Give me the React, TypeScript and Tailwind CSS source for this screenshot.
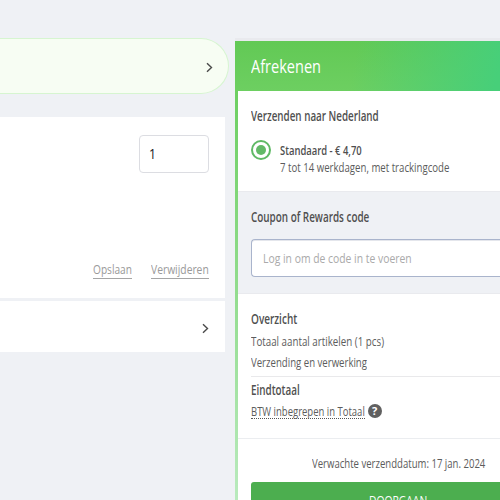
import { useLayoutEffect, useRef, useState } from "react";
import type { ReactNode } from "react";

type FitProps = { width: number; className?: string; children: ReactNode };

// One line of text, condensed horizontally to the given width.
function Fit({ width, className = "", children }: FitProps) {
  const ref = useRef<HTMLSpanElement>(null);
  const [scale, setScale] = useState(1);
  useLayoutEffect(() => {
    if (ref.current) setScale(width / ref.current.offsetWidth);
  }, [width]);
  return (
    <div className={`shrink-0 whitespace-nowrap ${className}`} style={{ width }}>
      <span ref={ref} className="inline-block origin-left align-top" style={{ transform: `scaleX(${scale})` }}>
        {children}
      </span>
    </div>
  );
}

function Chevron() {
  return (
    <svg width="7" height="11" viewBox="0 0 7 11" fill="none" stroke="#4a4a4a" strokeWidth="1.4">
      <path d="M1 1.2 5.5 5.5 1 9.8" />
    </svg>
  );
}

const heading = "h-5 text-[13.5px] leading-5 font-semibold text-[#4f4f4f]";
const body = "h-5 text-[13px] leading-5 text-[#5c5c5c]";

function Cart() {
  return (
    <div className="flex w-[235px] shrink-0 flex-col pt-[38px]">
      <div className="flex h-14 w-[229px] items-center justify-end rounded-r-full border border-l-0 border-[#d6f5d0] bg-[#f7fdf3] pt-[3px] pr-[15px]">
        <Chevron />
      </div>
      <div className="mt-[23px] flex h-[181px] w-[225px] flex-col justify-between bg-white pt-[18px] pr-4 pb-[19px]">
        <div className="flex h-[38px] w-[70px] items-center self-end rounded border border-[#dcdde2] pl-[9px]">
          <Fit width={7} className="h-5 text-[14px] leading-5 text-[#222]">1</Fit>
        </div>
        <div className="flex justify-end gap-[19px]">
          <Fit width={39} className="h-[18px] border-b border-[#a5a5a5] text-[13.5px] leading-[17px] text-[#999]">Opslaan</Fit>
          <Fit width={58} className="h-[18px] border-b border-[#a5a5a5] text-[13.5px] leading-[17px] text-[#999]">Verwijderen</Fit>
        </div>
      </div>
      <div className="mt-[3px] flex h-[51px] w-[225px] items-center justify-end bg-white pt-1 pr-4">
        <Chevron />
      </div>
    </div>
  );
}

function Checkout() {
  return (
    <div className="mt-[38px] flex flex-1 flex-col overflow-hidden border-t-[3px] border-[#e9eaee]">
      <header className="flex h-[50px] shrink-0 items-center bg-[linear-gradient(100deg,transparent_45%,#47cf79_98%),linear-gradient(#62c955,#6dcf61)] pl-[16px]">
        <Fit width={70} className="h-7 text-[18.5px] leading-7 font-medium text-white">Afrekenen</Fit>
      </header>
      <div className="flex flex-1 bg-[linear-gradient(#6dcf61,#beecc3)] pl-[3px]">
        <div className="flex flex-1 flex-col bg-white">
          <section className="h-[100px] pt-[15px] pl-[12.5px]">
            <Fit width={128} className={heading}>Verzenden naar Nederland</Fit>
            <div className="mt-[13px] flex">
              <div className="mt-px mr-[9px] ml-[0.5px] flex size-5 items-center justify-center rounded-full border-2 border-[#5fb965]">
                <div className="size-[10px] rounded-full bg-[#62b967]" />
              </div>
              <div className="pt-px">
                <Fit width={82} className="h-[17px] text-[13px] leading-5 font-semibold text-[#4f4f4f]">Standaard - € 4,70</Fit>
                <Fit width={169} className={body}>7 tot 14 werkdagen, met trackingcode</Fit>
              </div>
            </div>
          </section>
          <section className="h-[103px] border-y border-[#e9eaee] bg-[#eff1f5] pt-[15px] pl-[12.5px]">
            <Fit width={118} className={heading}>Coupon of Rewards code</Fit>
            <div className="mt-3 ml-[0.5px] flex h-[38px] items-center rounded-l-[4px] border border-r-0 border-[#a9b4cc] bg-white pb-px pl-[11px] shadow-[inset_0_1px_0_#e4e6ec]">
              <Fit width={149} className="h-5 text-[13.5px] leading-5 text-[#aaa]">Log in om de code in te voeren</Fit>
            </div>
          </section>
          <section className="h-[145px] border-b border-[#ebedf0] pt-[15px] pl-[12.5px]">
            <Fit width={46} className={heading}>Overzicht</Fit>
            <Fit width={133} className={`mt-[2px] ${body}`}>Totaal aantal artikelen (1 pcs)</Fit>
            <Fit width={116} className={`mt-px ${body}`}>Verzending en verwerking</Fit>
            <div className="mt-[4px] ml-[0.5px] border-t border-[#e9e9eb] pt-[3px]">
              <Fit width={49} className={`-ml-[0.5px] ${heading}`}>Eindtotaal</Fit>
              <div className="mt-[4px] -ml-[0.5px] flex">
                <Fit width={114} className="h-[15px] border-b border-dotted border-[#555] text-[13px] leading-[15px] text-[#5c5c5c]">BTW inbegrepen in Totaal</Fit>
                <div className="ml-[3px] flex size-[14px] items-center justify-center rounded-full bg-[#606060] text-[11px] leading-[14px] font-bold text-white">?</div>
              </div>
            </div>
          </section>
          <section className="pt-[14px] pl-[13px]">
            <Fit width={173} className={`ml-[61px] ${body}`}>Verwachte verzenddatum: 17 jan. 2024</Fit>
            <div className="mt-[9px] h-11 rounded-l-[3px] bg-[#4cae4f] pt-2 pl-[118px]">
              <Fit width={58} className="h-5 text-[13.5px] leading-5 text-white">DOORGAAN</Fit>
            </div>
          </section>
        </div>
      </div>
    </div>
  );
}

export default function App() {
  return (
    <div className="flex h-[500px] w-[500px] overflow-hidden bg-[#eff1f5] font-['Open_Sans','Noto_Sans',sans-serif]">
      <Cart />
      <Checkout />
    </div>
  );
}
